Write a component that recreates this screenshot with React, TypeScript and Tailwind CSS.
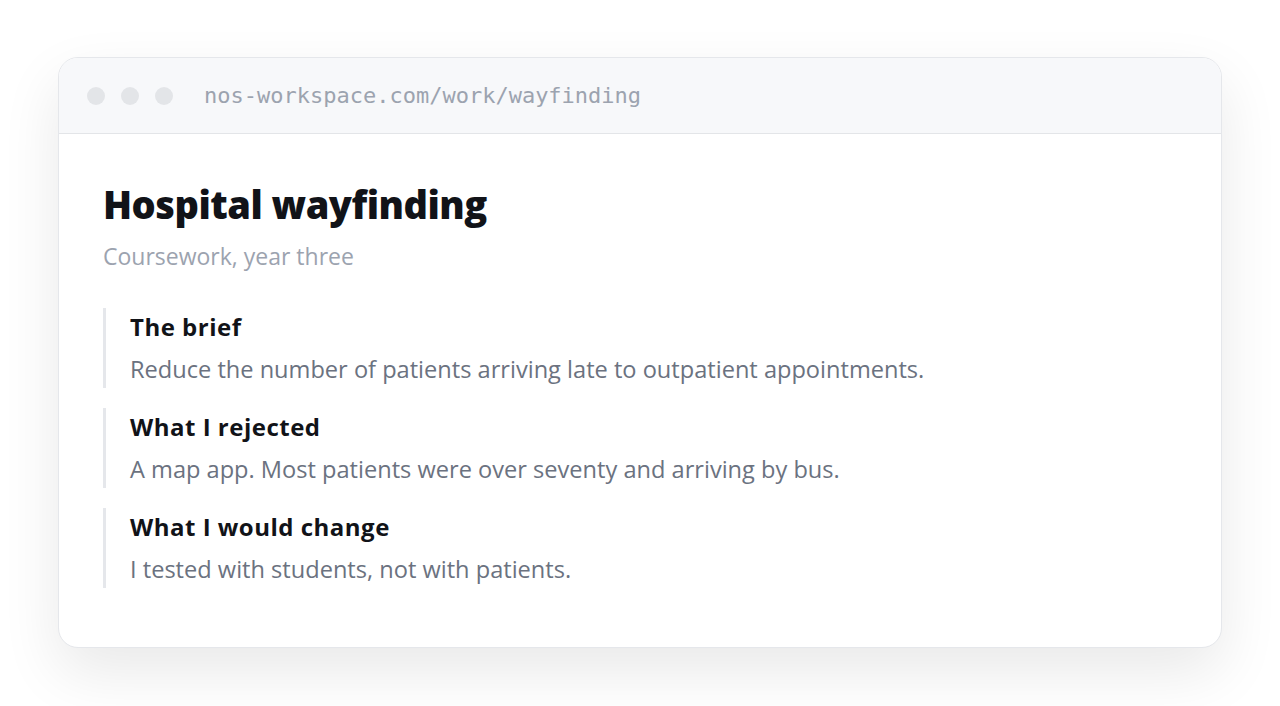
const sections = [
  {
    title: "The brief",
    body: "Reduce the number of patients arriving late to outpatient appointments.",
  },
  {
    title: "What I rejected",
    body: "A map app. Most patients were over seventy and arriving by bus.",
  },
  {
    title: "What I would change",
    body: "I tested with students, not with patients.",
  },
];

const App = () => {
  return (
    <div className="w-full h-[706px] bg-white px-[58px] pt-[57px] pb-[58px] font-['Open_Sans','Noto_Sans',sans-serif]">
      <div className="flex flex-col h-full bg-white border border-[#e5e7eb] rounded-[20px] overflow-hidden shadow-[0_24px_60px_rgba(0,0,0,0.09)]">
        <div className="flex items-center h-[76px] shrink-0 bg-[#f7f8fa] border-b border-[#e3e5e8] pl-[28px]">
          <div className="flex gap-[16px]">
            <span className="w-[18px] h-[18px] rounded-full bg-[#e3e5e8]" />
            <span className="w-[18px] h-[18px] rounded-full bg-[#e3e5e8]" />
            <span className="w-[18px] h-[18px] rounded-full bg-[#e3e5e8]" />
          </div>
          <span className="ml-[31px] text-[22px] text-[#9ca3af] font-['DejaVu_Sans_Mono',monospace]">
            nos-workspace.com/work/wayfinding
          </span>
        </div>
        <div className="flex flex-col px-[44px] pt-[46px]">
          <h1 className="text-[38px] leading-[48px] font-extrabold tracking-[-0.5px] text-[#111318]">
            Hospital wayfinding
          </h1>
          <p className="mt-[12px] text-[23px] leading-[32px] text-[#9ca3af]">
            Coursework, year three
          </p>
          <div className="flex flex-col gap-[20px] mt-[36px]">
            {sections.map((s) => (
              <div key={s.title} className="border-l-[3px] border-[#e5e7eb] pl-[24px] h-[80px] flex flex-col">
                <h2 className="text-[24px] leading-[38px] font-bold tracking-[0.5px] text-[#111318]">{s.title}</h2>
                <p className="mt-[4px] text-[23.6px] leading-[38px] text-[#6b7280]">{s.body}</p>
              </div>
            ))}
          </div>
        </div>
      </div>
    </div>
  );
};

export default App;
